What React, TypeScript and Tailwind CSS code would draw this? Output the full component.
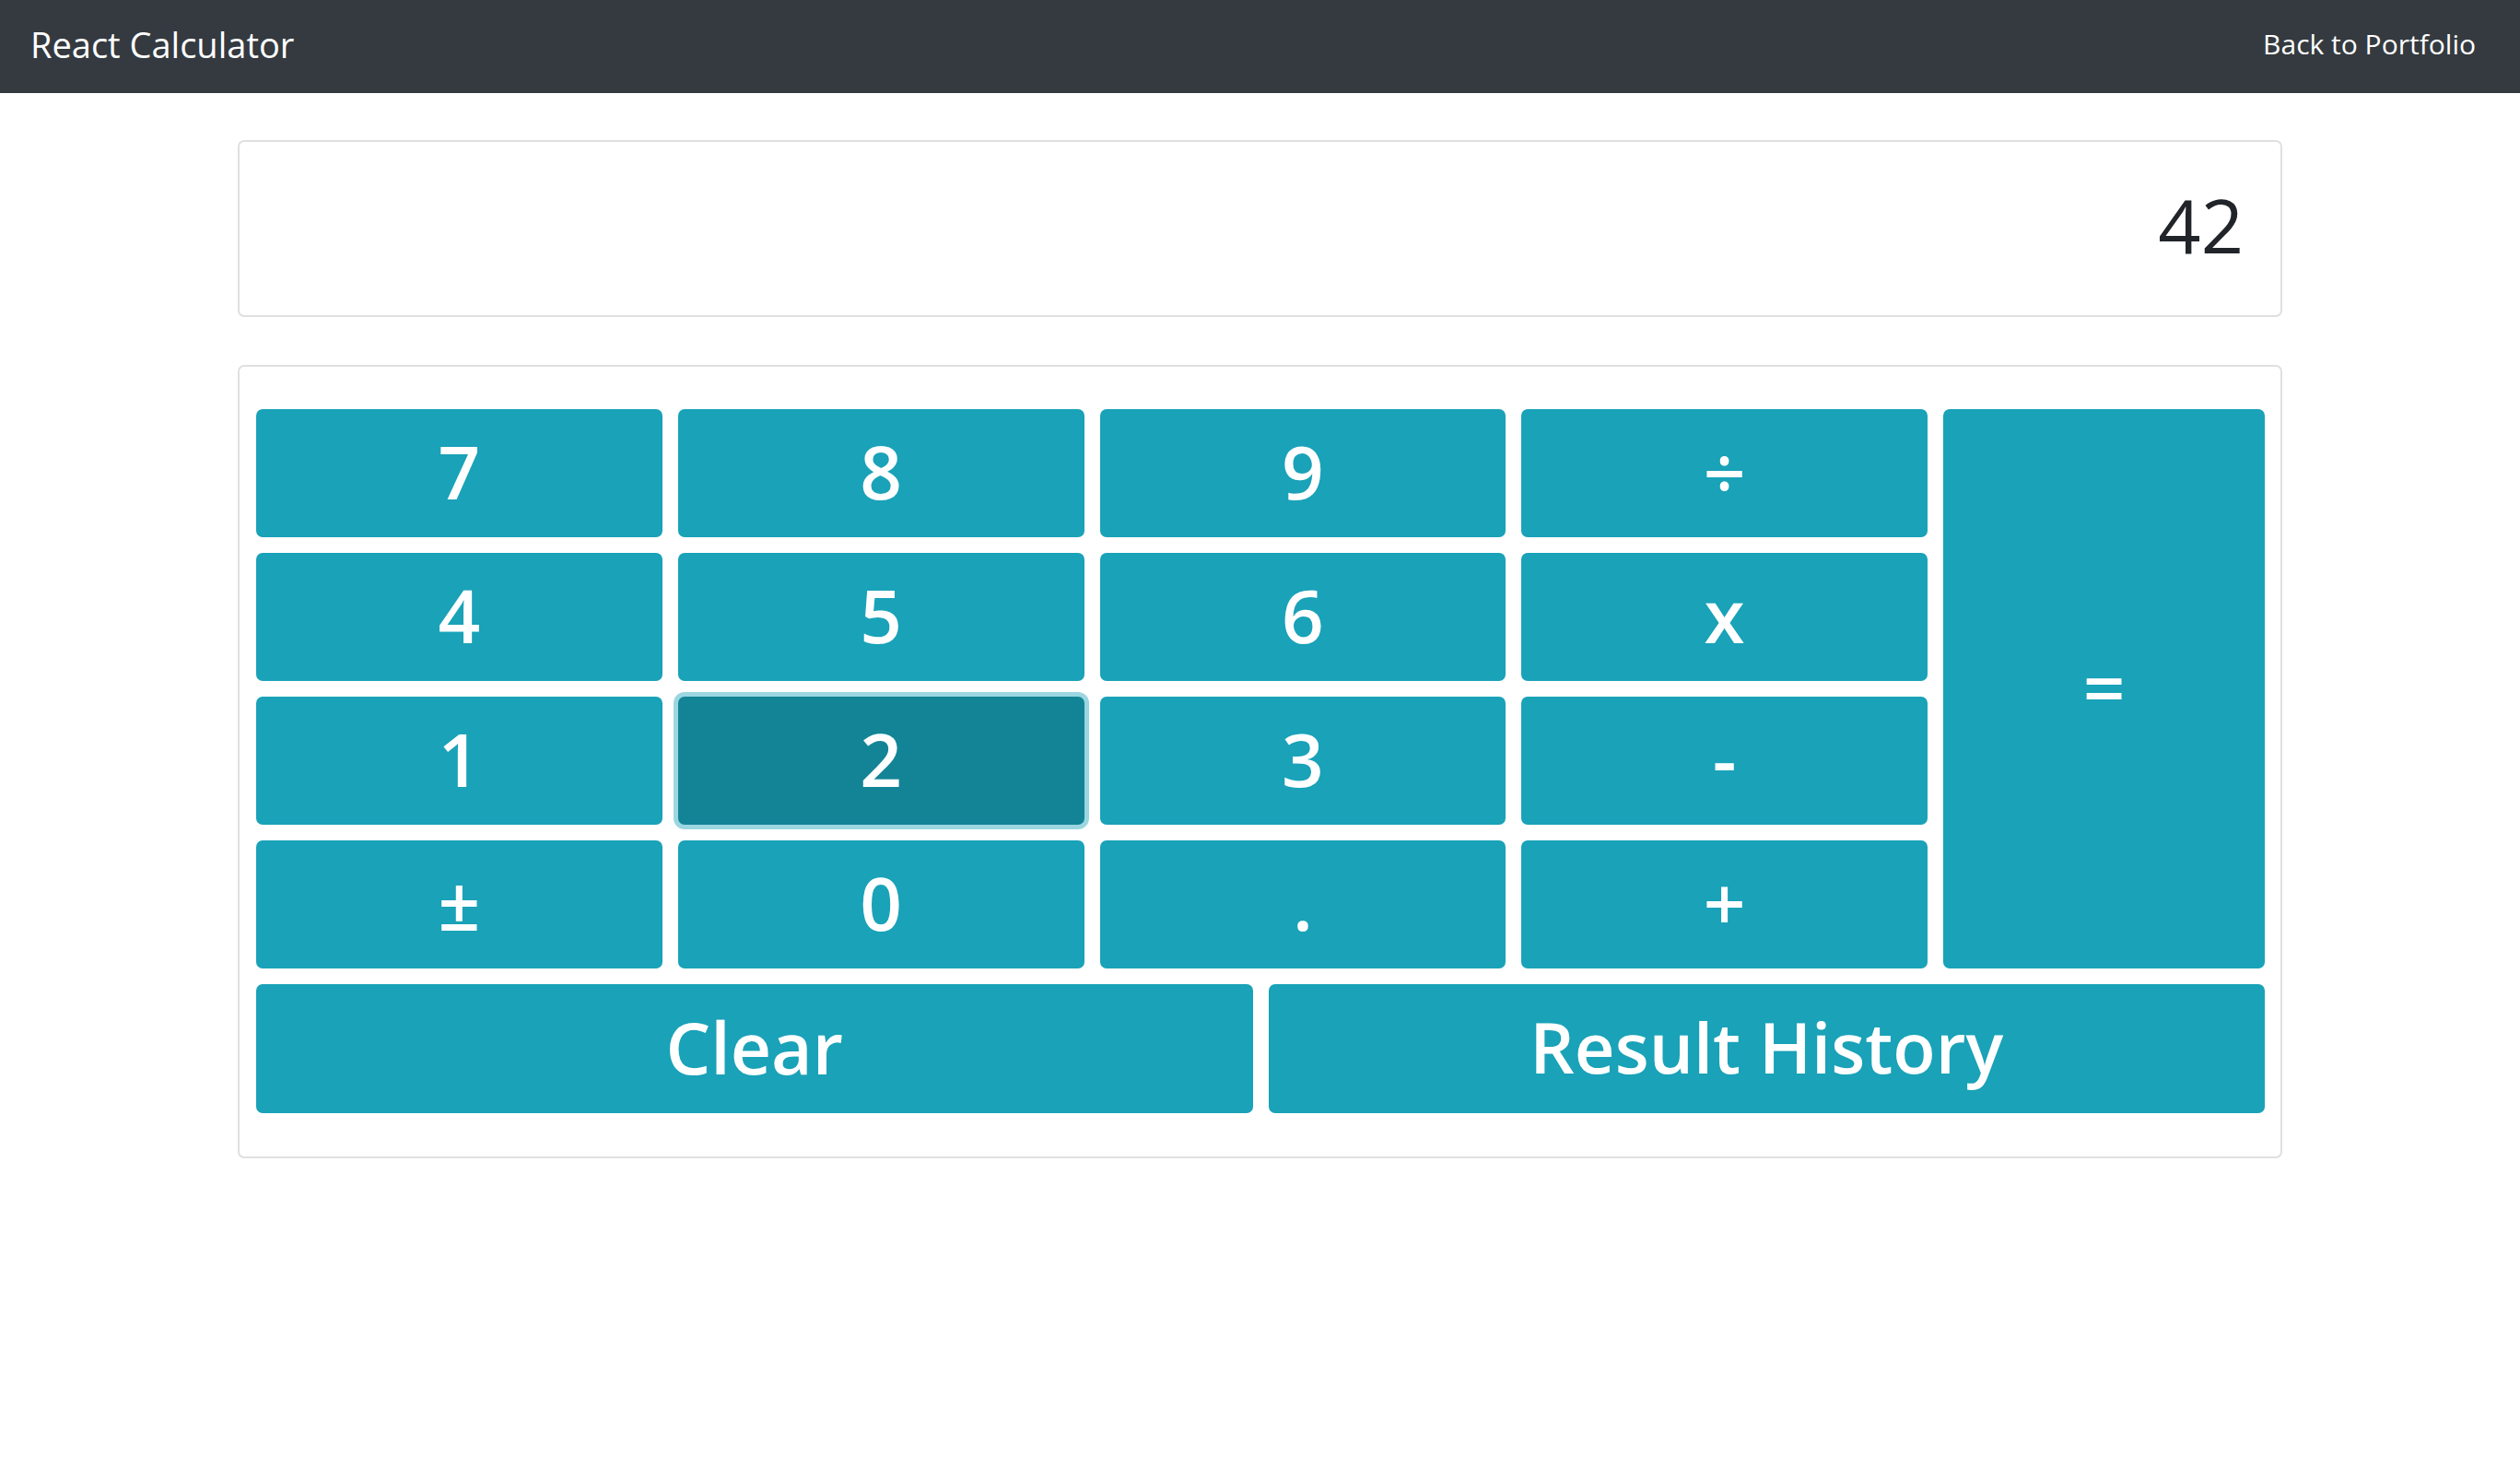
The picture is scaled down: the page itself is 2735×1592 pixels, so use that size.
import { useState } from "react";

const KEYS = ["7", "8", "9", "÷", "4", "5", "6", "x", "1", "2", "3", "-", "±", "0", ".", "+"];

function Key({ label, active, onClick }: { label: string; active?: boolean; onClick: () => void }) {
  return (
    <button
      onClick={onClick}
      className={
        "h-[139px] pb-[6px] rounded-[7px] text-white text-[80px] font-semibold leading-none flex items-center justify-center " +
        (active
          ? "bg-[#138496] shadow-[0_0_0_5px_rgba(58,176,195,0.5)]"
          : "bg-[#19a2b8]")
      }
    >
      {label}
    </button>
  );
}

export default function App() {
  const [display] = useState("42");
  const [pressed, setPressed] = useState("2");

  return (
    <div className="min-h-screen bg-white font-['Open_Sans',sans-serif]">
      {/* Navbar */}
      <nav className="h-[101px] bg-[#343a40] flex items-center justify-between pl-[33px] pr-[48px] pb-[5px]">
        <span className="text-white text-[38px] leading-none">React Calculator</span>
        <a className="text-white text-[30px] leading-none">Back to Portfolio</a>
      </nav>

      <div className="w-[2219px] mx-auto pt-[51px]">
        {/* Display */}
        <div className="h-[192px] border-2 border-[#e0e0e0] rounded-[7px] flex items-center justify-end pr-[40px] pb-[10px]">
          <span className="text-[81px] font-medium leading-none text-[#212529]">{display}</span>
        </div>

        {/* Keypad */}
        <div className="mt-[52px] border-2 border-[#e0e0e0] rounded-[7px] pt-[46px] pb-[47px] pl-[18px] pr-[17px] flex flex-col gap-[17px]">
          <div className="grid grid-cols-[repeat(4,minmax(0,1fr))_349px] grid-rows-[repeat(4,139px)] gap-[17px]">
            {KEYS.slice(0, 4).map(k => (
              <Key key={k} label={k} active={pressed === k} onClick={() => setPressed(k)} />
            ))}
            <button
              onClick={() => setPressed("=")}
              className="row-span-4 col-start-5 row-start-1 pb-[6px] rounded-[7px] bg-[#19a2b8] text-white text-[80px] font-semibold leading-none flex items-center justify-center"
            >
              =
            </button>
            {KEYS.slice(4).map(k => (
              <Key key={k} label={k} active={pressed === k} onClick={() => setPressed(k)} />
            ))}
          </div>
          <div className="grid grid-cols-2 gap-[17px]">
            <button className="h-[140px] pb-[4px] rounded-[7px] bg-[#19a2b8] text-white text-[77px] font-semibold leading-none">
              Clear
            </button>
            <button className="h-[140px] pb-[4px] rounded-[7px] bg-[#19a2b8] text-white text-[76px] font-semibold leading-none">
              Result History
            </button>
          </div>
        </div>
      </div>
    </div>
  );
}
